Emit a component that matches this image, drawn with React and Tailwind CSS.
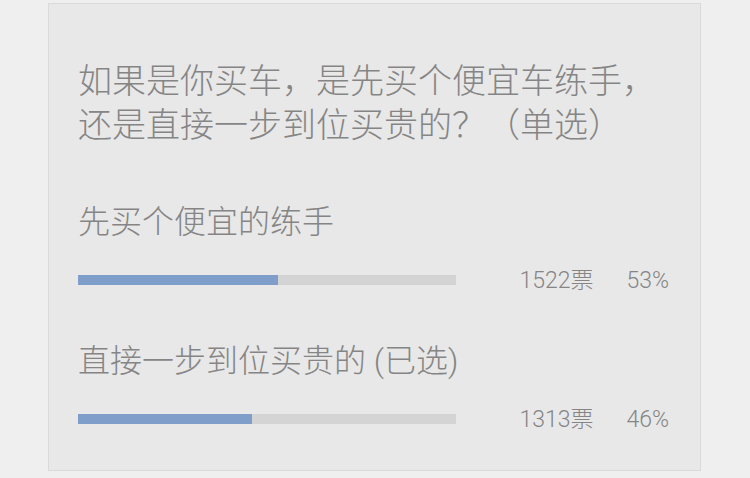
const options = [
  { label: '先买个便宜的练手', votes: 1522, pct: 53 },
  { label: '直接一步到位买贵的 (已选)', votes: 1313, pct: 46 },
];

function OptionRow({ label, votes, pct }) {
  return (
    <div>
      <div className="text-[32px] leading-[40px] text-[#858585]">{label}</div>
      <div className="mt-[33px] flex h-[10px] items-center">
        <div className="h-[10px] w-[378px] bg-[#d4d4d4]">
          <div className="h-full bg-[#7f9fca]" style={{ width: `${pct}%` }} />
        </div>
        <div className="ml-auto mr-[2px] flex items-center text-[23px] leading-none text-[#858585]">
          <span>{votes}票</span>
          <span className="ml-[33px]">{pct}%</span>
        </div>
      </div>
    </div>
  );
}

export default function App() {
  return (
    <div
      className="h-[478px] w-[750px] overflow-hidden bg-[#efefef] font-light"
      style={{ fontFamily: "Roboto, 'Noto Sans CJK SC', sans-serif" }}
    >
      <div className="ml-[48px] mt-[3px] h-[468px] w-[653px] border border-[#dadada] bg-[#e8e8e8] px-[29px] pt-[55px]">
        <div className="text-[34px] leading-[44px] text-[#858585]">
          如果是你买车，是先买个便宜车练手，
          <br />
          还是直接一步到位买贵的？（单选）
        </div>
        <div className="mt-[55px] flex flex-col gap-[56px]">
          {options.map((o) => (
            <OptionRow key={o.label} {...o} />
          ))}
        </div>
      </div>
    </div>
  );
}
